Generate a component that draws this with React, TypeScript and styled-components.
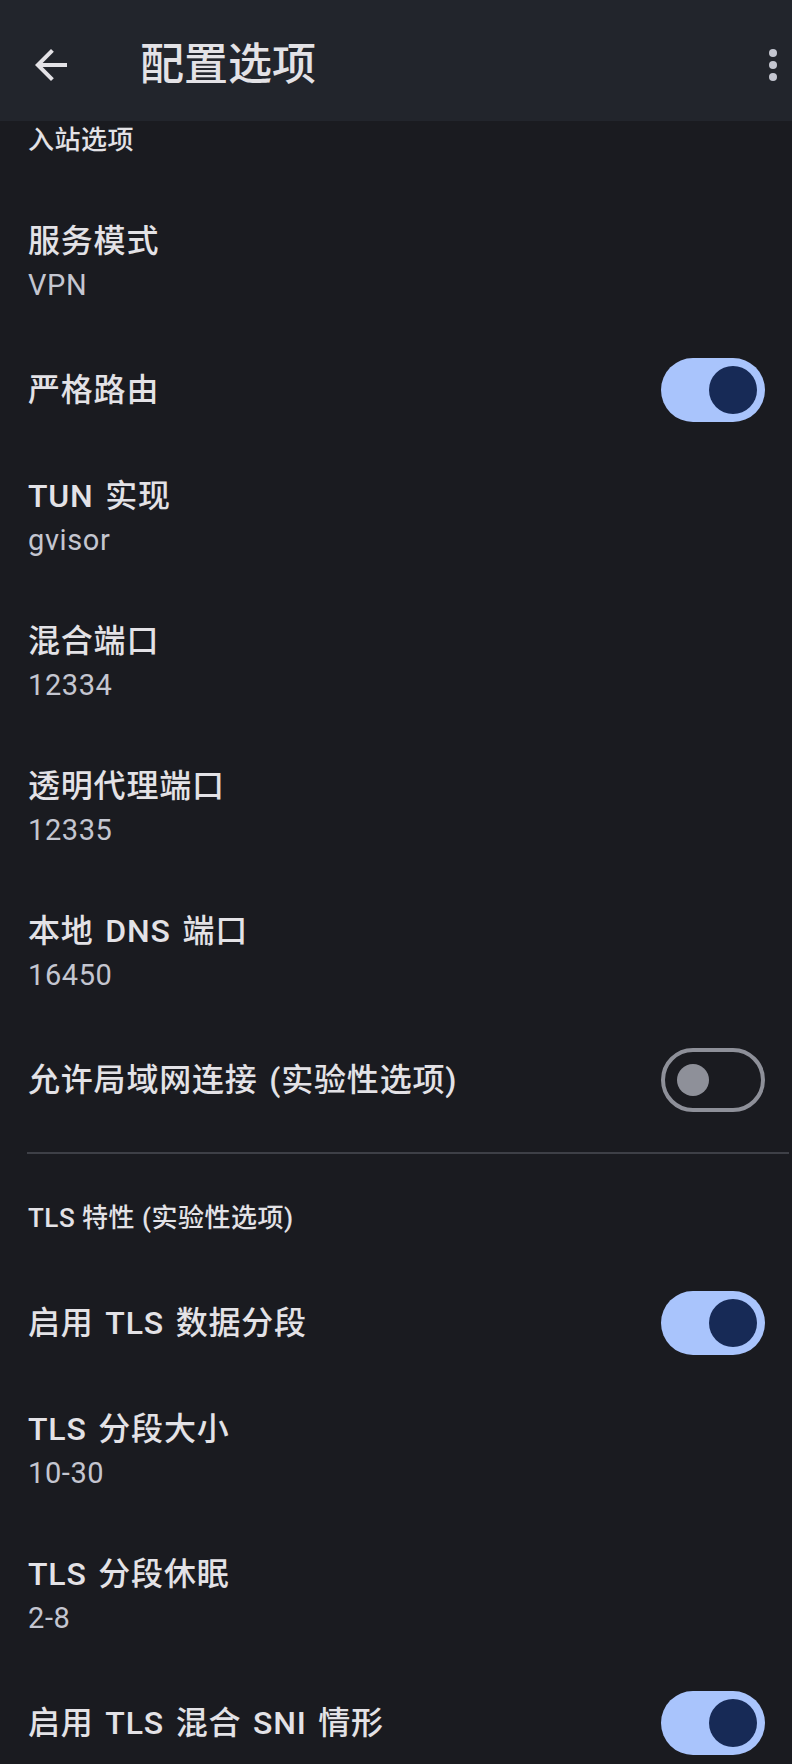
import styled, { createGlobalStyle } from 'styled-components';

const GlobalStyle = createGlobalStyle`
  html, body {
    margin: 0;
    padding: 0;
    background: #1a1b20;
    overflow: hidden;
  }
  body {
    font-family: Roboto, "Noto Sans CJK SC", sans-serif;
    -webkit-font-smoothing: antialiased;
  }
  * {
    box-sizing: border-box;
  }
`;

const Screen = styled.div`
  width: 792px;
  height: 1764px;
  background: #1a1b20;
  overflow: hidden;
  display: flex;
  flex-direction: column;
`;

const AppBar = styled.header`
  height: 121px;
  flex-shrink: 0;
  padding: 9px 0 0 27px;
  background: #22252c;
  display: flex;
  align-items: center;
`;

const IconButton = styled.button<{ $width?: number }>`
  width: ${({ $width }) => $width ?? 48}px;
  height: 48px;
  padding: 0;
  border: none;
  background: none;
  display: flex;
  align-items: center;
  justify-content: center;
  color: #e3e2e6;
`;

const MoreButton = styled(IconButton)`
  margin-right: 7px;
  color: #c4c6d0;
`;

const Title = styled.h1`
  flex: 1;
  margin: 0 0 0 65px;
  font-size: 44px;
  line-height: 56px;
  font-weight: 500;
  color: #e3e2e6;
`;

const List = styled.main`
  display: flex;
  flex-direction: column;
`;

const SectionHeader = styled.div<{ $top: number }>`
  padding: ${({ $top }) => $top}px 28px 32px;
  font-size: 26px;
  line-height: 36px;
  font-weight: 500;
  letter-spacing: 0.5px;
  color: #e3e2e6;
`;

const Row = styled.div<{ $twoLine: boolean }>`
  height: ${({ $twoLine }) => ($twoLine ? 145 : 110)}px;
  flex-shrink: 0;
  padding: 0 27px 0 28px;
  display: flex;
  align-items: center;
  justify-content: space-between;
`;

const RowText = styled.div`
  display: flex;
  flex-direction: column;
`;

const RowTitle = styled.span`
  font-size: 32px;
  line-height: 46px;
  font-weight: 500;
  letter-spacing: 0.8px;
  word-spacing: 3px;
  color: #e3e2e6;
`;

const RowSubtitle = styled.span`
  font-size: 29px;
  line-height: 43px;
  letter-spacing: 0.6px;
  color: #c4c6d0;
`;

const Track = styled.div<{ $on: boolean }>`
  width: 104px;
  height: 64px;
  flex-shrink: 0;
  border-radius: 32px;
  display: flex;
  align-items: center;
  justify-content: ${({ $on }) => ($on ? 'flex-end' : 'flex-start')};
  padding: ${({ $on }) => ($on ? '0 8px' : '0 12px')};
  background: ${({ $on }) => ($on ? '#a9c4fc' : 'transparent')};
  border: ${({ $on }) => ($on ? 'none' : '4px solid #8e9099')};
`;

const Knob = styled.span<{ $on: boolean }>`
  width: ${({ $on }) => ($on ? 48 : 32)}px;
  height: ${({ $on }) => ($on ? 48 : 32)}px;
  border-radius: 50%;
  background: ${({ $on }) => ($on ? '#172a56' : '#8e9099')};
`;

const Divider = styled.div`
  height: 2px;
  margin: 17px 3px 0 27px;
  background: #3e4047;
`;

type Item = { title: string; subtitle?: string; toggle?: boolean };

const inbound: Item[] = [
  { title: '服务模式', subtitle: 'VPN' },
  { title: '严格路由', toggle: true },
  { title: 'TUN 实现', subtitle: 'gvisor' },
  { title: '混合端口', subtitle: '12334' },
  { title: '透明代理端口', subtitle: '12335' },
  { title: '本地 DNS 端口', subtitle: '16450' },
  { title: '允许局域网连接 (实验性选项)', toggle: false },
];

const tls: Item[] = [
  { title: '启用 TLS 数据分段', toggle: true },
  { title: 'TLS 分段大小', subtitle: '10-30' },
  { title: 'TLS 分段休眠', subtitle: '2-8' },
  { title: '启用 TLS 混合 SNI 情形', toggle: true },
];

function Switch({ on }: { on: boolean }) {
  return (
    <Track $on={on}>
      <Knob $on={on} />
    </Track>
  );
}

function SettingRow({ title, subtitle, toggle }: Item) {
  return (
    <Row $twoLine={!!subtitle}>
      <RowText>
        <RowTitle>{title}</RowTitle>
        {subtitle && <RowSubtitle>{subtitle}</RowSubtitle>}
      </RowText>
      {toggle !== undefined && <Switch on={toggle} />}
    </Row>
  );
}

function App() {
  return (
    <>
      <GlobalStyle />
      <Screen>
        <AppBar>
          <IconButton aria-label="back">
            <svg width="48" height="48" viewBox="0 0 24 24" fill="currentColor">
              <path d="M20 11H7.83l5.59-5.59L12 4l-8 8 8 8 1.41-1.41L7.83 13H20v-2z" />
            </svg>
          </IconButton>
          <Title>配置选项</Title>
          <MoreButton $width={24} aria-label="more">
            <svg width="24" height="48" viewBox="6 0 12 24" fill="currentColor">
              <circle cx="12" cy="6" r="2" />
              <circle cx="12" cy="12" r="2" />
              <circle cx="12" cy="18" r="2" />
            </svg>
          </MoreButton>
        </AppBar>
        <List>
          <SectionHeader $top={1}>入站选项</SectionHeader>
          {inbound.map((item) => (
            <SettingRow key={item.title} {...item} />
          ))}
          <Divider />
          <SectionHeader $top={46}>TLS 特性 (实验性选项)</SectionHeader>
          {tls.map((item) => (
            <SettingRow key={item.title} {...item} />
          ))}
        </List>
      </Screen>
    </>
  );
}

export default App;
